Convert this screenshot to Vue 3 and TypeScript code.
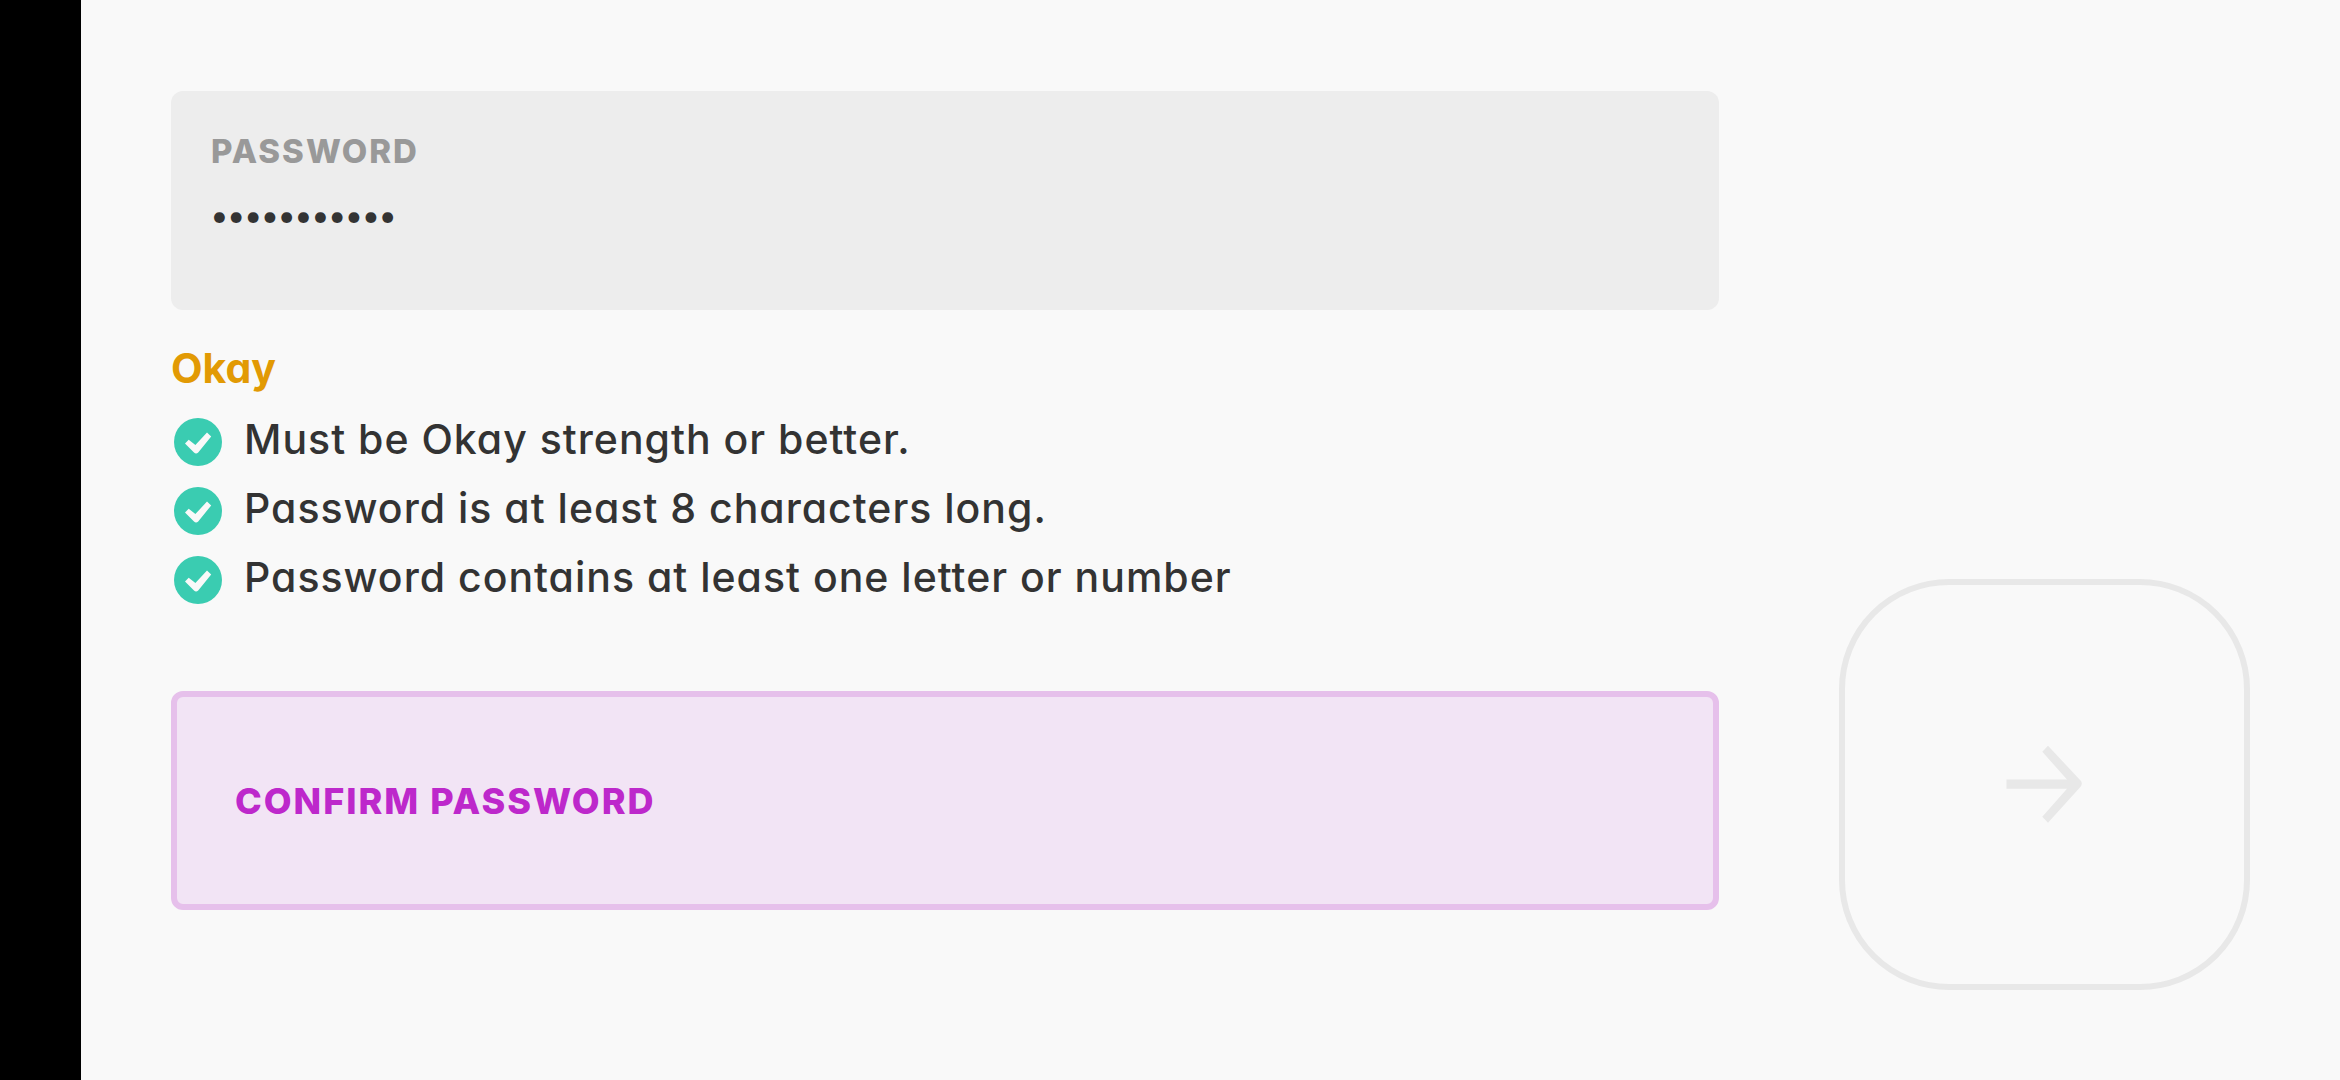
<script setup lang="ts">
import { ref } from 'vue'

const password = ref('hunter2pass')
const confirmation = ref('')
const strength = ref('Okay')

const requirements: string[] = [
  'Must be Okay strength or better.',
  'Password is at least 8 characters long.',
  'Password contains at least one letter or number',
]
</script>

<template>
  <div class="screen">
    <div class="cutout"></div>
    <form class="signup" @submit.prevent>
      <div class="fields">
        <div class="field">
          <label class="label" for="password">PASSWORD</label>
          <input id="password" v-model="password" class="entry" type="password" autocomplete="new-password" />
        </div>

        <section class="feedback">
          <p class="strength">{{ strength }}</p>
          <ul class="rules">
            <li v-for="rule in requirements" :key="rule" class="rule">
              <svg class="tick" viewBox="0 0 48 48" aria-hidden="true">
                <circle cx="24" cy="24" r="24" fill="#3accb1" />
                <path
                  d="M11 25.6 14.7 21.7 21.4 27 33 14.6 37.2 18.4 24.2 34.6Q22 36.4 20 34.6Z"
                  fill="#f9f9f9"
                />
              </svg>
              <span>{{ rule }}</span>
            </li>
          </ul>
        </section>

        <div class="field field-active">
          <label class="label label-active" for="confirm">CONFIRM PASSWORD</label>
          <input
            id="confirm"
            v-model="confirmation"
            class="entry entry-cover"
            type="password"
            autocomplete="new-password"
          />
        </div>
      </div>

      <button class="next" type="submit" aria-label="Continue" disabled>
        <svg class="arrow" viewBox="0 0 80 80" aria-hidden="true">
          <path
            d="M1.5 34.5H62L37.3 6.8 43 .8 76 36Q77.6 38.6 76 41.2L43 77.8 37.3 71.8 62 43.7H1.5Z"
            fill="#e8e8e8"
          />
        </svg>
      </button>
    </form>
  </div>
</template>

<style>
body {
  background: #f9f9f9;
}
</style>

<style scoped>
.screen {
  display: flex;
  min-height: 100vh;
  box-sizing: border-box;
  background: #f9f9f9;
  color: #333;
  font-family: Inter, Lato, sans-serif;
  font-feature-settings: 'cv11' 1;
}

.cutout {
  flex: 0 0 81px;
  background: #000;
}

.signup {
  flex: 1;
  display: flex;
  align-items: flex-end;
  gap: 120px;
  padding: 91px 90px 90px;
}

.fields {
  flex: 1;
  align-self: flex-start;
}

.field {
  position: relative;
  display: flex;
  flex-direction: column;
  box-sizing: border-box;
  min-height: 219px;
  padding: 38px 40px;
  border-radius: 12px;
  background: #ededed;
}

.field-active {
  justify-content: center;
  padding: 0 58px;
  border: 6px solid #e6c0eb;
  background: #f2e4f5;
}

.label {
  color: #999;
  font-size: 33px;
  font-weight: 800;
  line-height: 44px;
  letter-spacing: 2px;
}

.label-active {
  color: #bd28cb;
  font-size: 36px;
}

.entry {
  padding: 0;
  margin-top: 12px;
  border: 0;
  outline: 0;
  background: transparent;
  color: #333;
  font-family: Lato, sans-serif;
  font-size: 29px;
  line-height: 60px;
  height: 60px;
}

.entry-cover {
  position: absolute;
  inset: 0;
  height: auto;
  margin: 0;
  padding: 0 58px;
}

.feedback {
  padding: 30px 0 76px;
}

.strength {
  margin: 0;
  color: #e29a04;
  font-size: 41px;
  font-weight: 700;
  line-height: 56px;
}

.rules {
  margin: 0;
  padding: 12px 0 0;
  list-style: none;
}

.rule {
  display: flex;
  align-items: flex-start;
  gap: 22px;
  box-sizing: border-box;
  min-height: 69px;
  padding-top: 7px;
  font-size: 41px;
  font-weight: 500;
  line-height: 48px;
  letter-spacing: 1px;
}

.tick {
  flex: none;
  width: 48px;
  height: 48px;
  margin: 3px 0 0 3px;
}

.next {
  flex: none;
  display: flex;
  align-items: center;
  justify-content: center;
  width: 411px;
  height: 411px;
  padding: 0;
  border: 6px solid #e8e8e8;
  border-radius: 110px;
  background: transparent;
}

.arrow {
  width: 80px;
  height: 80px;
}
</style>
